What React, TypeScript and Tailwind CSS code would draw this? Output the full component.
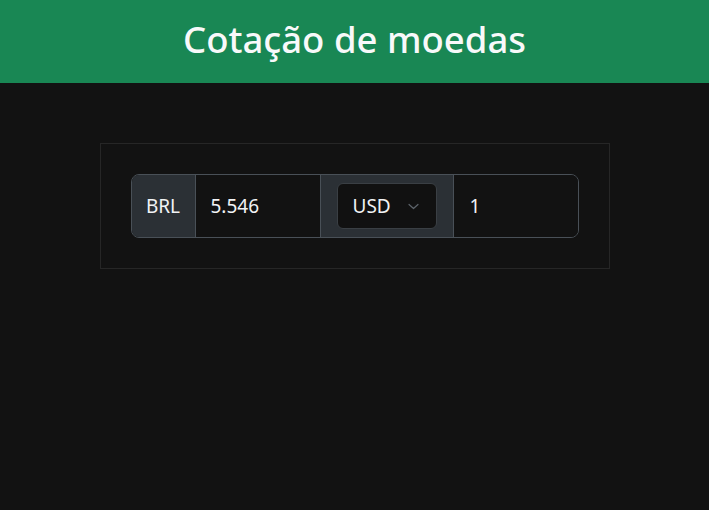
import React from "react";

export default function App() {
  const font = { fontFamily: '"Noto Sans", "Open Sans", sans-serif' };
  return (
    <div className="min-h-[510px] w-full bg-[#121212]" style={font}>
      <header className="flex h-[83px] items-center justify-center bg-[#198754]">
        <h1 className="text-[36.5px] font-medium leading-none text-[#f8f9fa] pb-[4px]">Cotação de moedas</h1>
      </header>
      <div className="flex justify-center pt-[60px]">
        <div className="w-[510px] border border-[#262626] p-[30px]">
          <div className="flex h-[64px] overflow-hidden rounded-[8px] border border-[#495057] text-[19px] text-[#f1f3f5]">
            <div className="flex w-[63px] items-center justify-center bg-[#2b3035]">BRL</div>
            <div className="flex w-[125px] items-center border-l border-[#495057] bg-[#121212] pl-[15px]">5.546</div>
            <div className="flex w-[133px] items-center border-l border-[#495057] bg-[#2b3035] px-[16px]">
              <div className="flex h-[46px] w-[101px] items-center justify-between rounded-[6px] border border-[#3a3f44] bg-[#111111] pl-[15px] pr-[16px]">
                <span>USD</span>
                <svg width="13" height="13" viewBox="0 0 16 16" fill="none" stroke="#5c636a" strokeWidth="1.5" strokeLinecap="round" strokeLinejoin="round">
                  <path d="M2.5 5.5l5.5 5 5.5-5" />
                </svg>
              </div>
            </div>
            <div className="flex flex-1 items-center border-l border-[#495057] bg-[#121212] pl-[16px]">1</div>
          </div>
        </div>
      </div>
    </div>
  );
}
